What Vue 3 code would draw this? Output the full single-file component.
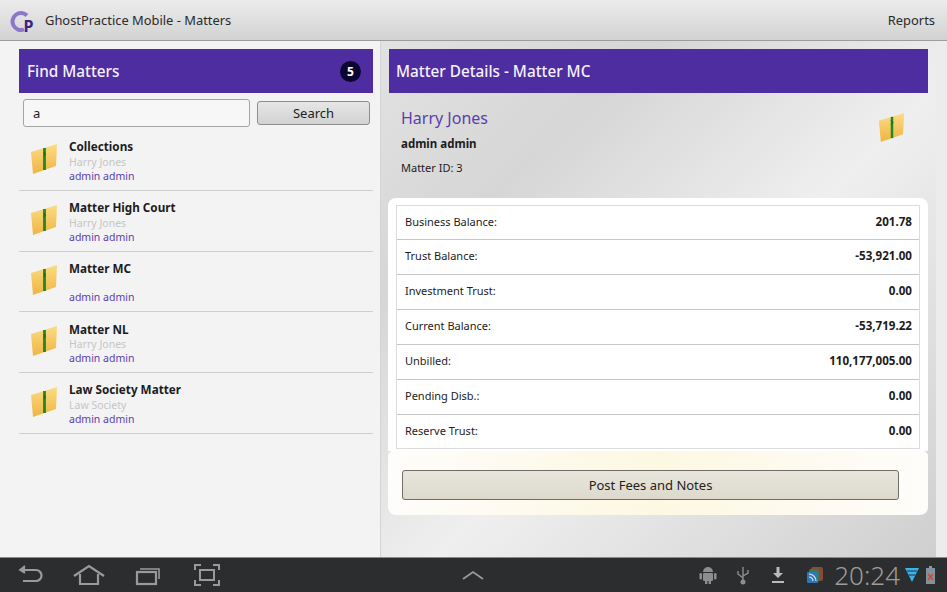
<script setup>
const matters = [
  { name: 'Collections', client: 'Harry Jones', owner: 'admin admin' },
  { name: 'Matter High Court', client: 'Harry Jones', owner: 'admin admin' },
  { name: 'Matter MC', client: '', owner: 'admin admin' },
  { name: 'Matter NL', client: 'Harry Jones', owner: 'admin admin' },
  { name: 'Law Society Matter', client: 'Law Society', owner: 'admin admin' }
];

const balances = [
  { label: 'Business Balance:', value: '201.78' },
  { label: 'Trust Balance:', value: '-53,921.00' },
  { label: 'Investment Trust:', value: '0.00' },
  { label: 'Current Balance:', value: '-53,719.22' },
  { label: 'Unbilled:', value: '110,177,005.00' },
  { label: 'Pending Disb.:', value: '0.00' },
  { label: 'Reserve Trust:', value: '0.00' }
];
</script>

<template>
  <div class="screen">
    <header class="action-bar">
      <svg class="logo" width="28" height="36" viewBox="0 0 28 36">
        <defs>
          <linearGradient id="folderFill" x1="0" y1="0" x2="0" y2="1">
            <stop offset="0" stop-color="#fbdc84" />
            <stop offset="1" stop-color="#efb543" />
          </linearGradient>
        </defs>
        <path d="M17 13.500 A8.500 8.500 0 1 0 14 27.500" fill="none" stroke="#8b78cc" stroke-width="4" />
        <text x="13.500" y="29.500" class="logo-p">P</text>
      </svg>
      <span class="app-title">GhostPractice Mobile - Matters</span>
      <span class="reports">Reports</span>
    </header>

    <main class="content">
      <section class="left-pane">
        <div class="pane-title">
          <span>Find Matters</span>
          <span class="count">5</span>
        </div>
        <div class="search-row">
          <div class="search-input">a</div>
          <button class="search-btn">Search</button>
        </div>
        <ul class="matter-list">
          <li v-for="m in matters" :key="m.name" class="matter">
            <svg class="folder" width="30" height="32" viewBox="0 0 30 32">
              <path d="M2 9 L28 1 L27 23 L4 31 Z" fill="url(#folderFill)" />
              <path d="M15.500 5 L15.500 27" fill="none" stroke="#1f8a22" stroke-width="2.800" />
              <path d="M14.500 9 L16.500 11 L14.500 13" fill="none" stroke="#14601a" stroke-width="1" />
            </svg>
            <div class="matter-text">
              <div class="matter-name">{{ m.name }}</div>
              <div class="matter-client">{{ m.client }}</div>
              <div class="matter-owner">{{ m.owner }}</div>
            </div>
          </li>
        </ul>
      </section>

      <section class="right-pane">
        <div class="pane-title">
          <span>Matter Details - Matter MC</span>
        </div>
        <div class="summary">
          <div>
            <div class="client">Harry Jones</div>
            <div class="owner">admin admin</div>
            <div class="matter-id">Matter ID: 3</div>
          </div>
          <svg class="folder" width="29" height="33" viewBox="0 0 30 32">
            <path d="M2 9 L28 1 L27 23 L4 31 Z" fill="url(#folderFill)" />
            <path d="M15.500 5 L15.500 27" fill="none" stroke="#1f8a22" stroke-width="2.600" />
            <path d="M14.500 9 L16.500 11 L14.500 13" fill="none" stroke="#14601a" stroke-width="1" />
          </svg>
        </div>
        <div class="card">
          <div class="card-top">
            <div class="balances">
              <div v-for="b in balances" :key="b.label" class="balance-row">
                <span>{{ b.label }}</span>
                <strong>{{ b.value }}</strong>
              </div>
            </div>
          </div>
          <div class="card-footer">
            <button class="post-btn">Post Fees and Notes</button>
          </div>
        </div>
      </section>
    </main>

    <footer class="system-bar">
      <div class="nav-icons">
        <svg width="28" height="22" viewBox="0 0 28 22" fill="none" stroke="#9a9a9a" stroke-width="2.200">
          <path d="M4 6 H20 A5.500 5.500 0 0 1 20 17 H7" />
          <path d="M9 2 L4 6 L9 9" stroke-width="1.800" fill="#9a9a9a" />
        </svg>
        <svg class="nav-home" width="32" height="22" viewBox="0 0 32 22" fill="none" stroke="#9a9a9a" stroke-width="2.200">
          <path d="M1 12 L16 2 L31 12" />
          <path d="M7 10 V20 H25 V10" />
        </svg>
        <svg class="nav-recent" width="26" height="22" viewBox="0 0 26 22" fill="none" stroke="#9a9a9a" stroke-width="2.200">
          <rect x="2" y="8" width="19" height="12" />
          <path d="M5 5 H24 V15" stroke-width="1.600" />
        </svg>
        <svg class="nav-full" width="26" height="22" viewBox="0 0 26 22" fill="none" stroke="#9a9a9a" stroke-width="2">
          <rect x="6" y="6" width="14" height="10" />
          <path d="M1 6 V1 H7 M19 1 H25 V6 M1 16 V21 H7 M19 21 H25 V16" />
        </svg>
      </div>
      <svg class="chevron" width="24" height="12" viewBox="0 0 24 12" fill="none" stroke="#9a9a9a" stroke-width="1.800">
        <path d="M2 10 L12 3 L22 10" />
      </svg>
      <div class="status">
        <svg width="18" height="20" viewBox="0 0 18 20" fill="#8e8e8e">
          <path d="M4 7 A5 5 0 0 1 14 7 Z" />
          <rect x="4" y="8" width="10" height="8" rx="1" />
          <rect x="0.500" y="8" width="2.500" height="6.500" rx="1.200" />
          <rect x="15" y="8" width="2.500" height="6.500" rx="1.200" />
          <rect x="6" y="15" width="2.400" height="4" />
          <rect x="9.600" y="15" width="2.400" height="4" />
        </svg>
        <svg class="st-usb" width="14" height="20" viewBox="0 0 14 20" fill="none" stroke="#8e8e8e" stroke-width="1.400">
          <path d="M7 2 V18 M7 13 L2 9 V6 M7 11 L12 8 V5" />
          <circle cx="7" cy="17" r="1.800" fill="#8e8e8e" />
        </svg>
        <svg class="st-dl" width="14" height="18" viewBox="0 0 14 18" fill="#bbb">
          <path d="M5.500 1 H8.500 V7 H12 L7 12 L2 7 H5.500 Z" />
          <rect x="1" y="15" width="12" height="2" />
        </svg>
        <svg class="st-rss" width="16" height="16" viewBox="0 0 16 16">
          <rect x="4" y="0" width="12" height="14" rx="2" fill="#8a4a3a" />
          <rect x="2" y="2" width="10" height="13" rx="2" fill="#3f7a43" />
          <rect x="0" y="5" width="11" height="11" rx="1" fill="#2f78b8" />
          <path d="M2 10 a4 4 0 0 1 4 4 M2 7 a7 7 0 0 1 7 7" fill="none" stroke="#dfe9f2" stroke-width="1.200" />
        </svg>
        <span class="clock">20:24</span>
        <svg class="st-wifi" width="14" height="16" viewBox="0 0 14 16">
          <path d="M0 1 H14 L7 15 Z" fill="#38b4e8" />
          <path d="M2 4 H12 M3.500 8 H10.500" stroke="#20303a" stroke-width="1" />
        </svg>
        <svg class="st-batt" width="9" height="18" viewBox="0 0 9 18">
          <rect x="3" y="0" width="3" height="2" fill="#8a9aa4" />
          <rect x="0" y="2" width="9" height="16" fill="#7f929e" />
          <path d="M2 8 L7 14 M7 8 L2 14" stroke="#d8452f" stroke-width="1.600" />
        </svg>
      </div>
    </footer>
  </div>
</template>

<style scoped>
.screen {
  width: 947px;
  height: 592px;
  display: flex;
  flex-direction: column;
  overflow: hidden;
  font-family: "Noto Sans", "Open Sans", sans-serif;
  color: #1c1c1c;
  background: #ececec;
}

.action-bar {
  height: 41px;
  flex: none;
  box-sizing: border-box;
  display: flex;
  align-items: center;
  padding: 0 12px 0 10px;
  background: linear-gradient(#ececec, #d2d2d2);
  border-bottom: 1px solid #9c9c9c;
}

.logo {
  margin-right: 7px;
}

.logo-p {
  font-family: "Noto Sans", sans-serif;
  font-size: 16px;
  font-weight: 700;
  fill: #3a2385;
}

.app-title,
.reports {
  font-size: 12.900px;
  color: #2a2a2a;
}

.reports {
  margin-left: auto;
}

.content {
  flex: 1;
  display: flex;
  min-height: 0;
}

.left-pane {
  width: 381px;
  box-sizing: border-box;
  flex: none;
  padding: 8px 7px 0 19px;
  background: #f3f3f3;
  border-right: 1px solid #d4d4d4;
}

.pane-title {
  height: 44px;
  box-sizing: border-box;
  display: flex;
  align-items: center;
  justify-content: space-between;
  padding: 0 12px 0 8px;
  background: #4e2da0;
  color: #f4f1fb;
  font-size: 15.300px;
  font-weight: 500;
}

.count {
  width: 21px;
  height: 21px;
  border-radius: 50%;
  background: #0a0630;
  color: #fff;
  display: flex;
  align-items: center;
  justify-content: center;
  font-size: 12px;
  font-weight: 700;
}

.search-row {
  display: flex;
  align-items: center;
  gap: 7px;
  padding: 6px 3px 0 4px;
}

.search-input {
  width: 227px;
  height: 28px;
  box-sizing: border-box;
  border: 1px solid #a4a4a4;
  border-radius: 3px;
  background: #f7f7f7;
  padding-left: 9px;
  font-size: 13px;
  line-height: 26px;
}

.search-btn {
  width: 113px;
  height: 24px;
  border: 1px solid #8e8e8e;
  border-radius: 3px;
  background: linear-gradient(#e6e6e6, #d2d2d2);
  font-family: inherit;
  font-size: 13px;
  color: #222;
  padding: 0;
}

.matter-list {
  list-style: none;
  margin: 3px 0 0;
  padding: 0;
}

.matter {
  height: 60.750px;
  box-sizing: border-box;
  display: flex;
  align-items: center;
  border-bottom: 1px solid #cfcfcf;
}

.matter .folder {
  margin: -2px 10px 0 10px;
  flex: none;
}

.matter-text {
  line-height: 14.500px;
  padding-top: 3px;
}

.matter-name {
  font-size: 11.700px;
  font-weight: 700;
  height: 15.500px;
}

.matter-client {
  font-size: 10.500px;
  color: #c6c6c6;
  height: 14px;
}

.matter-owner {
  font-size: 10.500px;
  color: #5b40ad;
}

.right-pane {
  width: 555px;
  flex: none;
  box-sizing: border-box;
  padding: 8px 8px 0 8px;
  background: linear-gradient(to bottom right, #e2e2e2 0%, #d6d6d6 25%, #efefef 55%, #cfcfcf 100%);
}

.right-pane .pane-title {
  padding-left: 7px;
}

.summary {
  display: flex;
  justify-content: space-between;
  padding: 15px 22px 0 12px;
  height: 105px;
  box-sizing: border-box;
}

.client {
  font-size: 16px;
  color: #5b3fae;
  line-height: 20px;
}

.owner {
  font-size: 11.500px;
  font-weight: 700;
  margin-top: 8px;
  line-height: 16px;
}

.matter-id {
  font-size: 11px;
  margin-top: 8px;
  line-height: 16px;
}

.summary .folder {
  margin-top: 3px;
}

.card {
  margin-left: -1px;
}

.card-top {
  background: #fff;
  border-radius: 8px 8px 0 0;
  padding: 7px 8px 2px;
}

.balances {
  border: 1px solid #dcdcdc;
}

.balance-row {
  height: 35px;
  box-sizing: border-box;
  display: flex;
  align-items: center;
  justify-content: space-between;
  padding: 0 7px 3px 8px;
  border-bottom: 1px solid #c6c6c6;
  font-size: 11px;
}

.balance-row:first-child {
  height: 34px;
}

.balance-row:last-child {
  height: 33px;
  border-bottom: none;
}

.balance-row strong {
  font-size: 11.600px;
}

.card-footer {
  height: 64px;
  box-sizing: border-box;
  border-radius: 5px 5px 8px 8px;
  background: linear-gradient(90deg, #fdfdfb, #fdf8e2 50%, #fdfdfb);
  padding: 19px 29px 0 14px;
}

.post-btn {
  display: block;
  width: 100%;
  height: 30px;
  border: 1px solid #6e6e66;
  border-radius: 3px;
  background: linear-gradient(#e8e6dc, #dcd9cc);
  font-family: inherit;
  font-size: 13px;
  color: #222;
  padding: 0;
}

.system-bar {
  height: 35px;
  flex: none;
  box-sizing: border-box;
  display: flex;
  align-items: center;
  background: #2b2d2e;
  border-top: 1px solid #8a8a8a;
  padding: 0 12px 0 16px;
}

.nav-icons {
  display: flex;
  align-items: center;
}

.nav-home {
  margin-left: 29px;
}

.nav-recent {
  margin-left: 30px;
}

.nav-full {
  margin-left: 33px;
}

.chevron {
  margin-left: 241px;
}

.status {
  margin-left: auto;
  display: flex;
  align-items: center;
}

.st-usb {
  margin-left: 19px;
}

.st-dl {
  margin-left: 21px;
}

.st-rss {
  margin-left: 22px;
}

.clock {
  font-size: 26px;
  font-weight: 300;
  color: #9c9c9c;
  margin-left: 11px;
}

.st-wifi {
  margin-left: 5px;
}

.st-batt {
  margin-left: 7px;
}
</style>
